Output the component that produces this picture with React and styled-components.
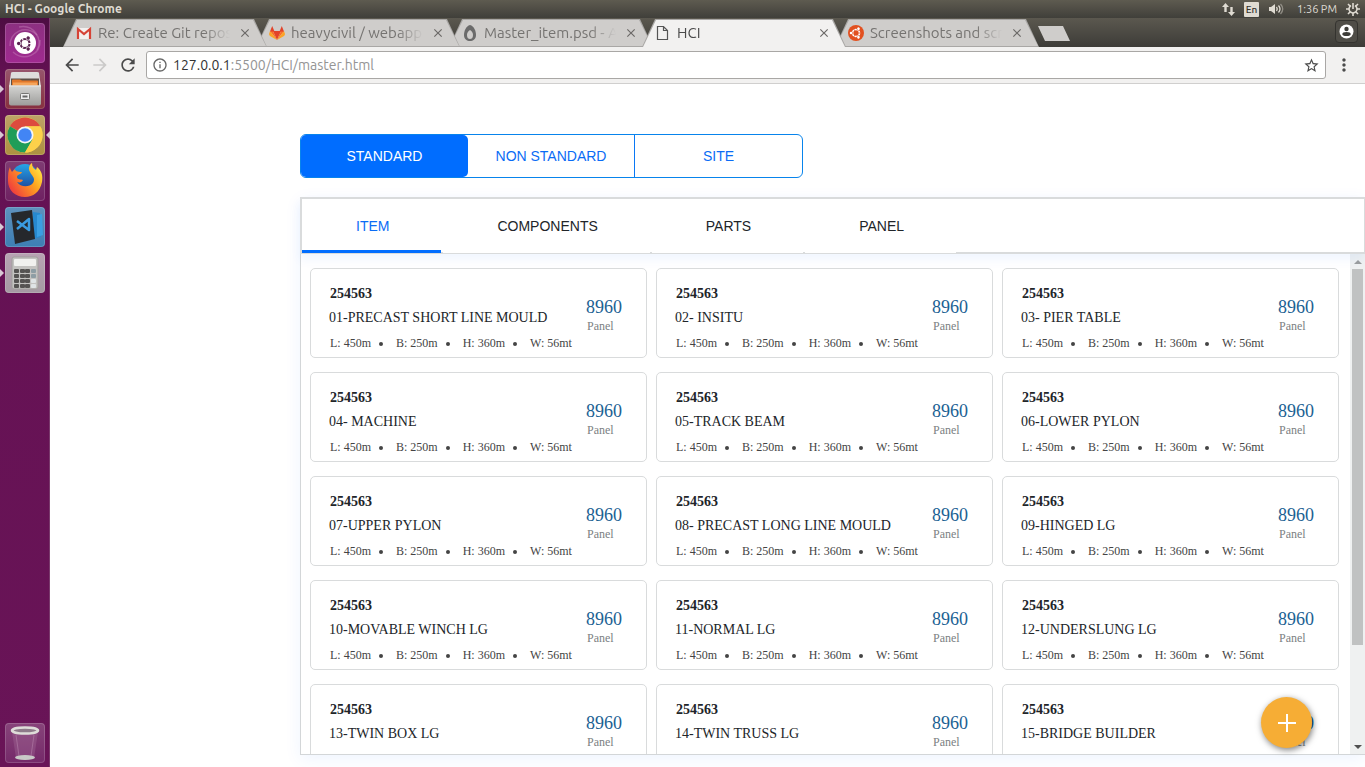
import React, { useState } from "react";
import styled, { createGlobalStyle, css } from "styled-components";
import {
  MdArrowBack,
  MdArrowForward,
  MdRefresh,
  MdInfoOutline,
  MdStarBorder,
  MdMoreVert,
  MdClose,
} from "react-icons/md";

const ui = `"Ubuntu", "Open Sans", "Noto Sans", sans-serif`;
const sans = `"Liberation Sans", Arial, sans-serif`;
const serif = `"Liberation Serif", "Times New Roman", serif`;

const GlobalStyle = createGlobalStyle`
  *, *::before, *::after { box-sizing: border-box; }
  body { margin: 0; background: #fff; overflow: hidden; }
  button { border: 0; margin: 0; padding: 0; background: none; font: inherit; color: inherit; cursor: pointer; }
  svg { display: block; flex: none; }
`;

const Desktop = styled.div`
  display: flex;
  flex-direction: column;
  height: 100vh;
`;

const SystemBar = styled.header`
  display: flex;
  align-items: center;
  flex: none;
  height: 18px;
  padding: 0 5px;
  background: linear-gradient(#5e5b50, #403f3a);
  color: #dfdbd2;
  font: 12px/18px ${ui};
`;

const WindowTitle = styled.div`
  flex: 1;
  font-size: 12px;
  font-weight: 700;
`;

const Indicators = styled.div`
  display: flex;
  align-items: center;
  gap: 9px;
`;

const LangBadge = styled.span`
  width: 15px;
  height: 15px;
  border-radius: 1px;
  background: #dfdbd2;
  color: #33322e;
  font-size: 10px;
  font-weight: 500;
  line-height: 15px;
  text-align: center;
`;

const Clock = styled.time`
  padding-left: 4px;
  font-size: 11px;
`;

const Workspace = styled.div`
  display: flex;
  flex: 1;
  min-height: 0;
`;

const Launcher = styled.nav`
  display: flex;
  flex-direction: column;
  flex: none;
  gap: 6px;
  width: 50px;
  padding: 5px 5px 4px;
  background: linear-gradient(#4d0d42, #641153 60px, #691457);
  border-right: 1px solid #7a3a6c;
`;

const LauncherItem = styled.button`
  position: relative;
  flex: none;
  width: 40px;
  height: 40px;
  border-radius: 4px;
  background: ${(p) => p.$tile};
  box-shadow: inset 0 0 0 1px rgba(255, 255, 255, 0.16);
  ${(p) => p.$last && css`margin-top: auto;`}
`;

const Pip = styled.span`
  position: absolute;
  top: 16px;
  ${(p) => (p.$side === "left" ? "left: -5px;" : "right: -5px;")}
  border: 4px solid transparent;
  ${(p) =>
    p.$side === "left"
      ? "border-left-color: #d8c8d4; border-right-width: 0;"
      : "border-right-color: #d8c8d4; border-left-width: 0;"}
`;

const Browser = styled.div`
  display: flex;
  flex-direction: column;
  flex: 1;
  min-width: 0;
`;

const TabStrip = styled.div`
  display: flex;
  flex: none;
  height: 29px;
  padding: 1px 7px 0 13px;
  background: linear-gradient(#5b584f, #3d3c38);
  font: 15px/26px ${ui};
`;

const BrowserTab = styled.div`
  position: relative;
  z-index: ${(p) => p.$z};
  display: flex;
  align-items: center;
  flex: none;
  width: 204px;
  height: 28px;
  margin-right: -11px;
  padding: 0 15px 0 13px;
  gap: 6px;
  color: ${(p) => (p.$active ? "#4a4a4a" : "#757371")};
  &::before,
  &::after {
    content: "";
    position: absolute;
    z-index: -1;
    inset: 0;
    background: #a9a7a5;
    clip-path: polygon(13px 0, calc(100% - 13px) 0, 100% 100%, 0 100%);
  }
  &::after {
    inset: ${(p) => (p.$active ? "1px 1px 0" : "1px")};
    background: ${(p) => (p.$active ? "#f2f1f0" : "#cfcdcb")};
  }
`;

const Favicon = styled.span`
  display: flex;
  justify-content: center;
  width: 16px;
  flex: none;
`;

const TabTitle = styled.span`
  flex: 1;
  min-width: 0;
  overflow: hidden;
  white-space: nowrap;
  mask-image: linear-gradient(to right, #000 calc(100% - 26px), transparent);
`;

const TabClose = styled.button`
  flex: none;
  margin-left: 2px;
  color: #6b6967;
`;

const NewTab = styled.button`
  flex: none;
  width: 32px;
  height: 15px;
  margin: 7px 0 0 10px;
  background: #cfcdcb;
  clip-path: polygon(0 0, 25px 0, 100% 100%, 7px 100%);
`;

const Profile = styled.button`
  display: flex;
  align-items: center;
  justify-content: center;
  width: 23px;
  height: 23px;
  margin: 1px 0 0 auto;
  border: 1px solid #34332f;
  border-radius: 4px;
  background: #4f4d47;
`;

const Toolbar = styled.div`
  display: flex;
  align-items: center;
  flex: none;
  gap: 8px;
  height: 37px;
  padding: 0 11px 0 12px;
  background: #f2f1f0;
  border-bottom: 1px solid #d0cfce;
`;

const NavButton = styled.button`
  color: ${(p) => (p.disabled ? "#cbcac9" : "#4b4b4b")};
`;

const AddressBar = styled.label`
  display: flex;
  align-items: center;
  flex: 1;
  height: 28px;
  padding: 0 5px;
  background: #fff;
  border: 1px solid #a9a7a5;
  border-radius: 3px;
  color: #333;
  font: 14px/26px ${ui};
  & > svg {
    margin-right: 5px;
    color: #666;
  }
`;

const AddressInput = styled.input`
  flex: 1;
  min-width: 0;
  padding: 0;
  border: 0;
  outline: 0;
  background: none;
  color: #949494;
  font: inherit;
`;

const Page = styled.main`
  display: flex;
  flex-direction: column;
  flex: 1;
  min-height: 0;
  padding: 50px 0 12px 250px;
  background: #fff;
  overflow: hidden;
`;

const Segments = styled.div`
  display: flex;
  flex: none;
  align-self: flex-start;
  height: 44px;
  border: 1px solid #0884ec;
  border-radius: 6px;
  font: 14px/42px ${sans};
`;

const Segment = styled.button`
  width: 167px;
  border-radius: ${(p) => (p.$active ? "5px" : "0")};
  background: ${(p) => (p.$active ? "#006dff" : "transparent")};
  color: ${(p) => (p.$active ? "#fff" : "#0a6cf5")};
  ${(p) => p.$divider && css`border-right: 1px solid #0a78f5;`}
`;

const Panel = styled.section`
  display: flex;
  flex-direction: column;
  flex: 1;
  min-height: 0;
  margin-top: 19px;
  box-shadow: 0 4px 16px rgba(0, 105, 255, 0.07);
`;

const PanelTabs = styled.div`
  position: relative;
  z-index: 1;
  display: flex;
  flex: none;
  gap: 2px;
  height: 57px;
  border: 2px solid #d9dbdc;
  border-right-width: 1px;
  background: #fff;
  box-shadow: 0 6px 10px rgba(0, 105, 255, 0.06);
  font: 14px/54px ${sans};
`;

const PanelTab = styled.button`
  height: 54px;
  padding: 0 52px 0 54px;
  background: #fff;
  color: ${(p) => (p.$active ? "#0a6cf5" : "#212529")};
  box-shadow: ${(p) => (p.$active ? "inset 0 -3px 0 #006dff" : "none")};
`;

const PanelBody = styled.div`
  display: flex;
  flex: 1;
  min-height: 0;
  border-left: 1px solid #d3d6d8;
  border-bottom: 1px solid #d3d6d8;
  background: #fff;
`;

const CardGrid = styled.ul`
  display: grid;
  flex: 1;
  grid-template-columns: repeat(3, 1fr);
  align-content: start;
  gap: 14px 9px;
  margin: 0;
  padding: 14px 11px 14px 9px;
  overflow-y: auto;
  scrollbar-width: none;
  list-style: none;
`;

const Card = styled.li`
  display: flex;
  justify-content: space-between;
  height: 90px;
  padding: 13px 24px 0 18px;
  border: 1px solid #d9dbdc;
  border-radius: 5px;
  background: #fff;
  color: #212529;
  font: 14px/24px ${serif};
`;

const Code = styled.div`
  padding-left: 1px;
  font-weight: 700;
`;

const Name = styled.div`
  white-space: nowrap;
`;

const Dimensions = styled.div`
  display: flex;
  padding-left: 1px;
  color: #444;
  font-size: 12px;
  line-height: 26px;
  white-space: nowrap;
`;

const Dimension = styled.span`
  display: flex;
  align-items: center;
  &:not(:last-child)::after {
    content: "";
    width: 4px;
    height: 4px;
    margin: 2px 13px 0 8px;
    border-radius: 50%;
    background: #444;
  }
`;

const Count = styled.div`
  padding-top: 15px;
  color: #1b6193;
  font-size: 18px;
  line-height: 20px;
`;

const CountUnit = styled.div`
  padding-left: 1px;
  color: #7b7f82;
  font-size: 12px;
  line-height: 18px;
`;

const ScrollTrack = styled.div`
  display: flex;
  flex-direction: column;
  flex: none;
  width: 15px;
  background: #eff1f1;
`;

const ScrollArrow = styled.button`
  display: flex;
  align-items: center;
  justify-content: center;
  flex: none;
  height: 15px;
  color: ${(p) => (p.$dim ? "#9b9d9d" : "#505050")};
`;

const ScrollLane = styled.div`
  flex: 1;
  padding: 0 2px;
`;

const ScrollThumb = styled.div`
  height: 80%;
  background: #c0c2c2;
`;

const AddButton = styled.button`
  position: fixed;
  z-index: 2;
  right: 53px;
  bottom: 19px;
  display: flex;
  align-items: center;
  justify-content: center;
  width: 51px;
  height: 51px;
  border-radius: 50%;
  background: #f6ad35;
  box-shadow: 1px 2px 6px rgba(0, 0, 0, 0.5);
`;

const UbuntuMark = ({ size, ring, gap }) => (
  <svg width={size} height={size} viewBox="0 0 24 24">
    <circle cx="12" cy="12" r="6" fill="none" stroke={ring} strokeWidth="2.8" />
    {[0, 120, 240].map((a) => (
      <g key={a} transform={`rotate(${a} 12 12)`}>
        <circle cx="3.6" cy="12" r="3.2" fill={gap} />
        <circle cx="3.6" cy="12" r="2.3" fill={ring} />
        <path d="M16.5 12H20" stroke={gap} strokeWidth="1.3" />
      </g>
    ))}
  </svg>
);

const DashIcon = () => (
  <svg width="40" height="40" viewBox="0 0 40 40">
    <g fill="none" stroke="#e2a9d4" strokeOpacity=".3" strokeWidth="1.5">
      <path d="M5 23C4 9 21 1 32 12" />
      <path d="M14 4c15-3 24 12 18 23" />
      <path d="M35 17c1 15-16 22-27 12" />
    </g>
    <circle cx="20" cy="20" r="11" fill="#fff" />
    <g transform="translate(11 11.5)"><UbuntuMark size={18} ring="#5b2352" gap="#fff" /></g>
  </svg>
);

const FilesIcon = () => (
  <svg width="40" height="40" viewBox="0 0 40 40">
    <defs>
      <linearGradient id="cabinet" x2="0" y2="1">
        <stop stopColor="#d5d5d3" />
        <stop offset="1" stopColor="#9d9d9b" />
      </linearGradient>
    </defs>
    <path d="M6 4q0-1 2-1h24q2 0 2 1l2 14H4z" fill="#dededc" />
    <path d="M6 9.500h28v8H6z" fill="#5e5148" />
    <path d="M7 11.500q0-1 1-1h7l2 1h15q1 0 1 1v5H7z" fill="#e2782b" />
    <path d="M8 13.500h24v3H8z" fill="#f5a45a" />
    <path d="M4 16.500h32v18q0 2-2 2H6q-2 0-2-2z" fill="url(#cabinet)" />
    <path d="M4 17h32" stroke="#e8e8e6" />
    <rect x="15.5" y="24.5" width="9" height="6" rx="1" fill="#eee" stroke="#767674" />
    <path d="M17.5 27.5h5" stroke="#666" strokeWidth="2" />
  </svg>
);

const ChromeIcon = () => (
  <svg width="40" height="40" viewBox="0 0 40 40">
    <circle cx="20" cy="20" r="17.5" fill="#fdd14a" />
    <path d="M20 20 4.9 11.2A17.5 17.5 0 0 1 35.1 11.2H20z" fill="#dd4b3e" />
    <path d="M20 20 4.9 11.2A17.5 17.5 0 0 0 20 37.5L27.6 24.4z" fill="#1f9d58" />
    <path d="M20 11.5h15.4A17.5 17.5 0 0 1 20 37.5l7.6-13z" fill="#fdd14a" />
    <circle cx="20" cy="20" r="8.5" fill="#f5f5f5" />
    <circle cx="20" cy="20" r="6.8" fill="#4285f4" />
  </svg>
);

const FirefoxIcon = () => (
  <svg width="40" height="40" viewBox="0 0 40 40">
    <defs>
      <linearGradient id="globe" x2="0" y2="1">
        <stop stopColor="#26a5e8" />
        <stop offset="1" stopColor="#1b3c91" />
      </linearGradient>
      <linearGradient id="flame" x1="1" x2="0" y1=".1" y2=".8">
        <stop stopColor="#fff04d" />
        <stop offset=".4" stopColor="#ffa51e" />
        <stop offset="1" stopColor="#ef3340" />
      </linearGradient>
    </defs>
    <circle cx="20" cy="17" r="14" fill="url(#globe)" />
    <path d="M5 6c0 2 1 3 2 5l3-3c0 2 2 3 7 3-1 3-5 2-5 5s4 2 6 3c-1 2-3 3-6 2 3 5 12 6 16 1 3-5-1-7-3-11-2-3-1-7 2-9 0 4 2 6 4 7l1-3c5 4 6 9 5 15-2 10-9 15-17 15C10 36 3 29 3 20 3 14 3 10 5 6z" fill="url(#flame)" />
  </svg>
);

const CodeIcon = () => (
  <svg width="40" height="40" viewBox="0 0 40 40">
    <path d="m28 5 7 1 1 24-9 2z" fill="#2789cf" />
    <path d="M32 8l5-1 1 21-6 2z" fill="#3b9fe2" />
    <path d="m6 6 21-3 3 29-20 5z" fill="#25282c" />
    <path d="m12 14 12 9V12L12 22" fill="none" stroke="#3a9be0" strokeWidth="2.5" strokeLinejoin="round" />
  </svg>
);

const CalculatorIcon = () => (
  <svg width="40" height="40" viewBox="0 0 40 40">
    <rect x="7" y="4" width="26" height="32" rx="2" fill="#c3c2c0" stroke="#a19f9d" />
    <rect x="9" y="6" width="22" height="7" rx="1" fill="#f1f1ef" />
    {[16, 21, 26, 31].map((y) =>
      [9, 15, 20, 26].map((x) => (
        <rect key={`${x}-${y}`} x={x} y={y} width="5" height="4" rx="1" fill={x === 26 ? (y > 21 ? "#dfe4e6" : "#8e9da4") : "#555352"} />
      ))
    )}
  </svg>
);

const TrashIcon = () => (
  <svg width="40" height="40" viewBox="0 0 40 40">
    <path d="M7 9h26l-4 26q-9 4-18 0z" fill="#a66f9b" fillOpacity=".35" />
    <ellipse cx="20" cy="34.5" rx="10" ry="2.5" fill="#c9c9c7" />
    <path d="M11 12l3 21M29 12l-3 21" stroke="#c79abe" strokeOpacity=".4" />
    <ellipse cx="20" cy="7.5" rx="13" ry="3" fill="#8d7a89" stroke="#deddd9" strokeWidth="2.5" />
  </svg>
);

const launcherItems = [
  { label: "Search your computer", icon: <DashIcon />, tile: "linear-gradient(#8c3080, #a02a90)" },
  { label: "Files", icon: <FilesIcon />, tile: "linear-gradient(#97556d, #872f3f)", left: true },
  { label: "Google Chrome", icon: <ChromeIcon />, tile: "linear-gradient(#bda267, #ad9040)", left: true, right: true },
  { label: "Firefox", icon: <FirefoxIcon />, tile: "linear-gradient(#7f3c73, #6f2162)" },
  { label: "Visual Studio Code", icon: <CodeIcon />, tile: "linear-gradient(#5e91bd, #3d7fb4)", left: true },
  { label: "Calculator", icon: <CalculatorIcon />, tile: "linear-gradient(#b8a3b3, #a59aa3)", left: true },
  { label: "Trash", icon: <TrashIcon />, tile: "linear-gradient(#87447a, #752969)", last: true },
];

const GmailIcon = () => (
  <svg width="16" height="16" viewBox="0 0 16 16">
    <path d="M1 3h14v11H1z" fill="#f3f0ef" />
    <path d="M2 14V4l6 5 6-5v10" fill="none" stroke="#d64336" strokeWidth="2.2" />
  </svg>
);

const GitlabIcon = () => (
  <svg width="16" height="16" viewBox="0 0 16 16">
    <path d="M8 15 12 6H4z" fill="#e24329" />
    <path d="M8 15 4 6H1zm0 0 4-9h3z" fill="#fc6d26" />
    <path d="M1 6 0 9q0 1 1 2l7 4zm14 0 1 3q0 1-1 2l-7 4z" fill="#fca326" />
    <path d="M1 6.500h4.500L3.200 1zm14 0h-4.500L12.800 1z" fill="#e24329" />
  </svg>
);

const DropIcon = () => (
  <svg width="14" height="16" viewBox="0 0 14 16">
    <path fillRule="evenodd" d="M7 0C3 1 1 6 1 10c0 4 3 6 6 6s6-2 6-6C13 6 11 1 7 0zm0 5c2 1 3 3 3 5 0 3-1.500 4-3 4s-3-1-3-4c0-2 1-4 3-5z" fill="#6b6b6b" />
  </svg>
);

const FileIcon = () => (
  <svg width="16" height="16" viewBox="0 0 16 16">
    <path d="M2.500 1.500h6l4 4v9h-10zM8.500 1.500v4h4" fill="none" stroke="#555" strokeWidth="1.200" />
  </svg>
);

const AskUbuntuIcon = () => (
  <svg width="16" height="16" viewBox="0 0 16 16">
    <circle cx="8" cy="8" r="8" fill="#e2501f" />
    <g transform="translate(1 1)"><UbuntuMark size={14} ring="#fff" gap="#e2501f" /></g>
  </svg>
);

const browserTabs = [
  { title: "Re: Create Git repos", icon: <GmailIcon /> },
  { title: "heavycivil / webapp", icon: <GitlabIcon /> },
  { title: "Master_item.psd - A", icon: <DropIcon /> },
  { title: "HCI", icon: <FileIcon />, active: true },
  { title: "Screenshots and scr", icon: <AskUbuntuIcon /> },
];

const segments = ["STANDARD", "NON STANDARD", "SITE"];
const panelTabs = ["ITEM", "COMPONENTS", "PARTS", "PANEL"];
const dimensions = ["L: 450m", "B: 250m", "H: 360m", "W: 56mt"];
const items = [
  "01-PRECAST SHORT LINE MOULD",
  "02- INSITU",
  "03- PIER TABLE",
  "04- MACHINE",
  "05-TRACK BEAM",
  "06-LOWER PYLON",
  "07-UPPER PYLON",
  "08- PRECAST LONG LINE MOULD",
  "09-HINGED LG",
  "10-MOVABLE WINCH LG",
  "11-NORMAL LG",
  "12-UNDERSLUNG LG",
  "13-TWIN BOX LG",
  "14-TWIN TRUSS LG",
  "15-BRIDGE BUILDER",
];

const ItemCard = ({ name }) => (
  <Card>
    <div>
      <Code>254563</Code>
      <Name>{name}</Name>
      <Dimensions>
        {dimensions.map((d) => (
          <Dimension key={d}>{d}</Dimension>
        ))}
      </Dimensions>
    </div>
    <div>
      <Count>8960</Count>
      <CountUnit>Panel</CountUnit>
    </div>
  </Card>
);

export default function App() {
  const [segment, setSegment] = useState("STANDARD");
  const [tab, setTab] = useState("ITEM");

  return (
    <Desktop>
      <GlobalStyle />
      <SystemBar>
        <WindowTitle>HCI - Google Chrome</WindowTitle>
        <Indicators>
          <svg width="13" height="13" viewBox="0 0 13 13" fill="#dfdbd2">
            <path d="M3.500 0 7 4H4.700v5H2.300V4H0zM9.500 13 6 9h2.300V4h2.400v5H13z" />
          </svg>
          <LangBadge>En</LangBadge>
          <svg width="16" height="14" viewBox="0 0 16 14" fill="none" stroke="#dfdbd2">
            <path d="M1 5h2l4-3v10L3 9H1z" fill="#dfdbd2" stroke="none" />
            <path d="M8.500 5q1.500 2 0 4M10.500 3.500q3 3.500 0 7" strokeWidth="1.300" />
            <path d="M12.500 2q4.500 5 0 10" strokeOpacity=".45" strokeWidth="1.300" />
          </svg>
          <Clock>1:36 PM</Clock>
          <svg width="14" height="14" viewBox="0 0 14 14" fill="none" stroke="#dfdbd2">
            <path d="M5 3.500a4 4 0 1 0 4 0M7 1v6" strokeWidth="1.600" />
            <path d="M0 7h3M11 7h3M2 2l2 2M12 2l-2 2M2 12l2-2M12 12l-2-2M7 11v3" strokeWidth="1.600" />
          </svg>
        </Indicators>
      </SystemBar>

      <Workspace>
        <Launcher>
          {launcherItems.map((item) => (
            <LauncherItem key={item.label} aria-label={item.label} $tile={item.tile} $last={item.last}>
              {item.icon}
              {item.left && <Pip $side="left" />}
              {item.right && <Pip $side="right" />}
            </LauncherItem>
          ))}
        </Launcher>

        <Browser>
          <TabStrip>
            {browserTabs.map((t, i) => (
              <BrowserTab key={t.title} $active={t.active} $z={t.active ? 9 : 8 - i}>
                <Favicon>{t.icon}</Favicon>
                <TabTitle>{t.title}</TabTitle>
                <TabClose aria-label="Close tab"><MdClose size={14} /></TabClose>
              </BrowserTab>
            ))}
            <NewTab aria-label="New tab" />
            <Profile aria-label="Profile">
              <svg width="15" height="15" viewBox="0 0 15 15">
                <circle cx="7.500" cy="7.500" r="7" fill="#fff" />
                <circle cx="7.500" cy="5" r="2.200" fill="#3d3c38" />
                <ellipse cx="7.500" cy="10" rx="4.200" ry="2" fill="#3d3c38" />
              </svg>
            </Profile>
          </TabStrip>

          <Toolbar>
            <NavButton aria-label="Back"><MdArrowBack size={20} /></NavButton>
            <NavButton aria-label="Forward" disabled><MdArrowForward size={20} /></NavButton>
            <NavButton aria-label="Reload"><MdRefresh size={20} /></NavButton>
            <AddressBar>
              <MdInfoOutline size={16} />
              <span>127.0.0.1</span>
              <AddressInput aria-label="Address" defaultValue=":5500/HCI/master.html" />
              <NavButton aria-label="Bookmark this page"><MdStarBorder size={17} /></NavButton>
            </AddressBar>
            <NavButton aria-label="Menu"><MdMoreVert size={20} /></NavButton>
          </Toolbar>

          <Page>
            <Segments>
              {segments.map((s, i) => (
                <Segment key={s} $active={s === segment} $divider={i === 1} onClick={() => setSegment(s)}>
                  {s}
                </Segment>
              ))}
            </Segments>

            <Panel>
              <PanelTabs role="tablist">
                {panelTabs.map((t) => (
                  <PanelTab key={t} role="tab" aria-selected={t === tab} $active={t === tab} onClick={() => setTab(t)}>
                    {t}
                  </PanelTab>
                ))}
              </PanelTabs>
              <PanelBody>
                <CardGrid>
                  {items.map((name) => (
                    <ItemCard key={name} name={name} />
                  ))}
                </CardGrid>
                <ScrollTrack>
                  <ScrollArrow aria-label="Scroll up" $dim>
                    <svg width="8" height="4" viewBox="0 0 8 4"><path d="M0 4l4-4 4 4z" fill="currentColor" /></svg>
                  </ScrollArrow>
                  <ScrollLane><ScrollThumb /></ScrollLane>
                  <ScrollArrow aria-label="Scroll down">
                    <svg width="8" height="4" viewBox="0 0 8 4"><path d="M0 0l4 4 4-4z" fill="currentColor" /></svg>
                  </ScrollArrow>
                </ScrollTrack>
              </PanelBody>
            </Panel>
            <AddButton aria-label="Add item">
              <svg width="18" height="18" viewBox="0 0 18 18">
                <path d="M9 0v18M0 9h18" stroke="#fff" strokeWidth="2" />
              </svg>
            </AddButton>
          </Page>
        </Browser>
      </Workspace>
    </Desktop>
  );
}
